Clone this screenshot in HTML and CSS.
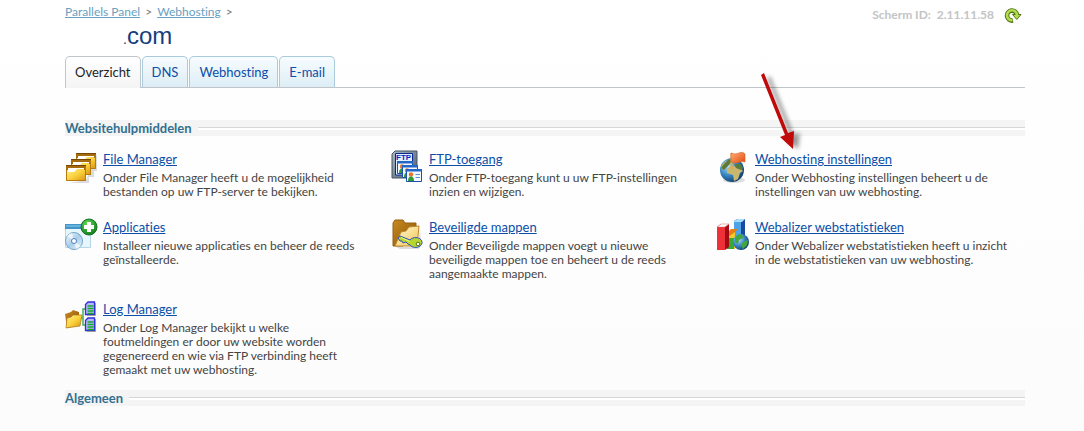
FILE: index.html
```html
<!DOCTYPE html>
<html lang="nl">
<head>
<meta charset="utf-8">
<title>Webhosting</title>
<link rel="stylesheet" href="styles.css">
</head>
<body>
<svg width="0" height="0" class="defs" aria-hidden="true">
  <defs>
    <linearGradient id="gold" x1="0" y1="0" x2="1" y2="1"><stop offset="0" stop-color="#fff08c"/><stop offset=".5" stop-color="#fbd23c"/><stop offset="1" stop-color="#d79012"/></linearGradient>
    <linearGradient id="brown" x1="0" y1="0" x2="1" y2="1"><stop offset="0" stop-color="#c98a22"/><stop offset="1" stop-color="#8a5206"/></linearGradient>
    <linearGradient id="cream" x1="0" y1="0" x2="1" y2="1"><stop offset="0" stop-color="#fffbd8"/><stop offset="1" stop-color="#f3c552"/></linearGradient>
    <radialGradient id="plus" cx=".4" cy=".3" r=".8"><stop offset="0" stop-color="#63d957"/><stop offset="1" stop-color="#077415"/></radialGradient>
    <radialGradient id="globe" cx=".35" cy=".35" r=".75"><stop offset="0" stop-color="#b4e0f6"/><stop offset=".5" stop-color="#3987c4"/><stop offset="1" stop-color="#09345f"/></radialGradient>
    <linearGradient id="flag" x1="0" y1="0" x2="1" y2="1"><stop offset="0" stop-color="#ffb27a"/><stop offset="1" stop-color="#e4470b"/></linearGradient>
    <linearGradient id="disc" x1="0" y1="0" x2="1" y2="1"><stop offset="0" stop-color="#f7fcff"/><stop offset=".5" stop-color="#a9cde8"/><stop offset="1" stop-color="#eaf6fd"/></linearGradient>
    <linearGradient id="server" x1="0" y1="0" x2="1" y2="1"><stop offset="0" stop-color="#a9b9c6"/><stop offset="1" stop-color="#46596a"/></linearGradient>
    <g id="folder">
      <path d="M0 0H20V16H0Z" fill="#a66c0b"/>
      <path d="M2 3H18V9H2Z" fill="#fff"/>
      <path d="M2 7H8L11 4H18V5H20V16H0V5H2Z" fill="url(#gold)"/>
      <path d="M.5 5V15.500H19.500V2" fill="none" stroke="#b67a10"/>
      <path d="M0 .5H20" stroke="#764704"/>
    </g>
    <g id="card">
      <path d="M.5 .5H15.500V12.500H.5Z" fill="#f4faff" stroke="#1c50a8"/>
      <path d="M0 0H16V2.500H0Z" fill="#2565c7"/>
      <circle cx="5" cy="5.500" r="2.200" fill="#e8762a"/>
      <path d="M2 12Q2 7.500 5 7.500T8 12Z" fill="#2f9a36"/>
      <path d="M9.500 5.500H14M9.500 8.500H14" stroke="#5d91cf"/>
    </g>
    <g id="log">
      <path d="M1.500 3.500L4 1H10.500V13.500H1.500Z" fill="#b6b6ff" stroke="#3030d8" stroke-width="1.300"/>
      <path d="M3.500 5H9.500M3.500 7.500H9.500M3.500 10H9.500M3.500 12.500H9.500" stroke="#18a828" stroke-width="1.500"/>
      <path d="M11.500 2V14.500H3" fill="none" stroke="#9b9b9b"/>
    </g>
  </defs>
</svg>

<div class="page">
  <header class="top">
    <nav class="crumbs" aria-label="Kruimelpad"><a href="#">Parallels Panel</a><span>&gt;</span><a href="#">Webhosting</a><span>&gt;</span></nav>
    <div class="screen">
      <span>Scherm ID:&nbsp; 2.11.11.58</span>
      <button class="refresh" type="button" aria-label="Vernieuwen">
        <svg width="18" height="16" viewBox="0 0 18 16"><path d="M9 13.500A5 5 0 1 1 13 8" fill="none" stroke="#52761c" stroke-width="4.600"/><path d="M8.500 7.500H17L12.800 12.500Z" fill="#b2dc4b" stroke="#52761c"/><path d="M8.400 13.300A5 5 0 1 1 13 8.500" fill="none" stroke="#b2dc4b" stroke-width="2.600"/></svg>
      </button>
    </div>
  </header>
  <h1><small>.</small>com</h1>

  <nav class="tabs" aria-label="Tabbladen">
    <a class="tab current" href="#" aria-current="page">Overzicht</a>
    <a class="tab" href="#">DNS</a>
    <a class="tab" href="#">Webhosting</a>
    <a class="tab" href="#">E-mail</a>
  </nav>

  <main>
    <h2 class="section"><span>Websitehulpmiddelen</span></h2>
    <div class="tools">
      <article class="tool">
        <svg class="icon" viewBox="0 0 32 32"><path d="M4 32H24V26H29V20H32V3L21 29Z" fill="#0002"/><use href="#folder" x="11" y="2"/><use href="#folder" x="6" y="8"/><use href="#folder" x="1" y="14"/></svg>
        <div class="text"><a href="#">File Manager</a><p>Onder File Manager heeft u de mogelijkheid<br>bestanden op uw FTP-server te bekijken.</p></div>
      </article>
      <article class="tool">
        <svg class="icon" viewBox="0 0 32 32"><path d="M1 3L4 0H26V23L23 27H1Z" fill="url(#server)" stroke="#455565"/><path d="M4.500 2.500H21.500V24H4.500Z" fill="#e4efff" stroke="#0a278e"/><text x="5" y="9" class="ftp">FTP</text><use href="#card" x="6" y="10"/><use href="#card" x="11" y="14"/><use href="#card" x="15" y="18"/></svg>
        <div class="text"><a href="#">FTP-toegang</a><p>Onder FTP-toegang kunt u uw FTP-instellingen<br>inzien en wijzigen.</p></div>
      </article>
      <article class="tool">
        <svg class="icon" viewBox="0 0 32 32"><ellipse cx="17" cy="29" rx="11" ry="3" fill="#0002"/><circle cx="15" cy="19" r="12" fill="url(#globe)"/><path d="M9 10Q5 12 4 17L6 19L9 14L12 12ZM10 18L14 15L22 16L26 20L23 22L21 28L17 30L16 24L10 22Z" fill="#c9b66f"/><path d="M4 17L7 13L12 8L15 10L11 15L7 19ZM17 13L23 13L26 17L24 19L19 17Z" fill="#5c7b3a"/><path d="M14.500 18V2" stroke="#e6a443" stroke-width="2"/><path d="M14 2Q18 4 22 2T28 3V11Q25 10 21 11.500T14 10.500Z" fill="url(#flag)" stroke="#d2602a" stroke-width=".6"/></svg>
        <div class="text"><a href="#">Webhosting instellingen</a><p>Onder Webhosting instellingen beheert u de<br>instellingen van uw webhosting.</p></div>
        <svg class="arrow" width="50" height="84" viewBox="0 0 50 84" aria-hidden="true"><path d="M8 3L11 1L35 60L41 58L39 74L27 65L32 63Z" class="shadow" transform="translate(4 3)"/><path d="M6 3L9 1L33 61L39 59L38 77L25 65L30 63Z" fill="#c00a0a"/></svg>
      </article>
      <article class="tool">
        <svg class="icon" viewBox="0 0 32 32"><path d="M.5 6H25.500V28.500H.5Z" fill="#e7f5fd" stroke="#b5d7ea"/><path d="M0 5H22V10H0Z" fill="#4195c8"/><path d="M1 7H20" stroke="#8dd1ef"/><circle cx="9" cy="22" r="8.500" fill="url(#disc)" stroke="#73a5c9"/><path d="M9 22L2 17A8 8 0 0 1 7 14ZM9 22L16 27A8 8 0 0 1 11 30Z" fill="#ffffffa0"/><circle cx="9" cy="22" r="2.500" fill="#fff" stroke="#4c80bb"/><circle cx="24" cy="8" r="8" fill="url(#plus)" stroke="#137421"/><path d="M22 3H26V6H29V10H26V13H22V10H19V6H22Z" fill="#fff"/></svg>
        <div class="text"><a href="#">Applicaties</a><p>Installeer nieuwe applicaties en beheer de reeds<br>geïnstalleerde.</p></div>
      </article>
      <article class="tool">
        <svg class="icon" viewBox="0 0 32 32"><path d="M2 4L4 1H12L14 4H25V9L12 27H2Z" fill="url(#brown)" stroke="#946010"/><path d="M4 27L10 13L15 12L18 8L28 7L26 27Z" fill="url(#cream)" stroke="#bd872b"/><path d="M5 28H27L29 9L30 26L28 30H9Z" fill="#0002"/><path d="M19 21L9 17L7 19L9 22L11 22L12 24L15 23L17 25L19 26A6.500 5 0 1 0 19 21Z" fill="#b6d52e" stroke="#2f4fc0"/><path d="M10 18.500L19 22.500" stroke="#e9f79a"/><circle cx="27" cy="25" r="1.800" fill="#fff" stroke="#55751a"/></svg>
        <div class="text"><a href="#">Beveiligde mappen</a><p>Onder Beveiligde mappen voegt u nieuwe<br>beveiligde mappen toe en beheert u de reeds<br>aangemaakte mappen.</p></div>
      </article>
      <article class="tool">
        <svg class="icon" viewBox="0 0 32 32"><path d="M17 2L20 0H28V28H17Z" fill="#1a4a9e"/><path d="M17 3H24V28H17Z" fill="#4da4e8"/><path d="M17 2L20 0H28L25 3H17Z" fill="#a7dcf7"/><path d="M11 13L14 10H21L18 13V29H11Z" fill="#e97c13"/><path d="M11 18L18 13V30H11Z" fill="#f7c92b"/><path d="M10 19H17V30H10Z" fill="#39a837"/><path d="M0 8L4 5H12V28L8 31H0Z" fill="#a30a13"/><path d="M0 8H8V31H0Z" fill="#ee3038"/><path d="M0 8L4 5H12L8 8Z" fill="#fff" stroke="#d66a6a" stroke-width=".5"/><circle cx="24" cy="23" r="8" fill="url(#globe)"/><path d="M18 19Q20 15 25 15L26 19L22 21L21 25L18 23ZM26 23L31 21L30 26L26 30L24 26Z" fill="#43a63e"/></svg>
        <div class="text"><a href="#">Webalizer webstatistieken</a><p>Onder Webalizer webstatistieken heeft u inzicht<br>in de webstatistieken van uw webhosting.</p></div>
      </article>
      <article class="tool">
        <svg class="icon" viewBox="0 0 32 32"><path d="M14 17H18V8H22M18 17V24H22" fill="none" stroke="#48ae54" stroke-width="1.500"/><path d="M0 13L6 11L8 9L14 11V24L2 27Z" fill="url(#brown)"/><path d="M1 27L2 17L6 16L8 14L17 14L15 25Z" fill="url(#gold)" stroke="#aa731a" stroke-width=".7"/><use href="#log" x="19" y="0"/><use href="#log" x="19" y="16"/></svg>
        <div class="text"><a href="#">Log Manager</a><p>Onder Log Manager bekijkt u welke<br>foutmeldingen er door uw website worden<br>gegenereerd en wie via FTP verbinding heeft<br>gemaakt met uw webhosting.</p></div>
      </article>
    </div>
    <h2 class="section"><span>Algemeen</span></h2>
  </main>
</div>
</body>
</html>
```
FILE: styles.css
```css
* { box-sizing: border-box; }
html { min-height: 100%; background: linear-gradient(#fff, #fcfcfc); }
body { margin: 0; color: #444; font-family: "Trebuchet MS", Lato, sans-serif; font-size: 12px; line-height: 14px; font-variant-ligatures: none; }
h1, h2, p { margin: 0; }
a { color: #0b4ea8; }
.defs { position: absolute; }
.page { padding: 5px 59px 24px 65px; }
.top { display: flex; justify-content: space-between; height: 18px; }
.crumbs { display: flex; gap: 5px; color: #777; }
.crumbs a { color: #6aa1bf; }
.screen { display: flex; align-items: center; gap: 10px; height: 20px; padding-right: 3px; color: #c4c4c4; font-weight: 700; }
.refresh { display: flex; padding: 0; border: 0; background: none; cursor: pointer; }
h1 { padding-left: 58px; color: #153e7e; font: 24px/26px "Liberation Sans", Arial, sans-serif; }
h1 small { font-size: 14px; }
.tabs { display: flex; align-items: flex-end; gap: 1px; height: 36px; border-bottom: 1px solid #bfc5c8; }
.tab { height: 31px; padding: 0 9px; border: 1px solid #a9cbdc; border-bottom: 0; border-radius: 5px 5px 0 0; background: linear-gradient(#f7fcff, #ddedf5); font-size: 13px; line-height: 30px; text-decoration: none; }
.tab.current { height: 32px; margin-bottom: -1px; border-color: #bfc5c8; background: linear-gradient(#fff, #f4f4f4); color: #222; }
main { padding-top: 32px; }
.section { display: flex; align-items: center; gap: 6px; height: 16px; background: #f4f4f4; color: #33708f; font-size: 13px; line-height: 16px; font-weight: 700; }
.section::after { content: ""; flex: 1; height: 2px; border-top: 1px solid #d3d7d9; background: #fff; }
.tools { display: grid; grid-template-columns: 326fr 326fr 308fr; row-gap: 20px; padding: 15px 0 13px; }
.tool { position: relative; display: flex; gap: 6px; }
.icon { flex: none; width: 32px; height: 32px; overflow: visible; }
.text { white-space: nowrap; }
.text a { display: block; width: max-content; margin-bottom: 4px; font-size: 13px; line-height: 16px; }
.ftp { font: bold 8px "Liberation Sans", Arial, sans-serif; fill: #0a1fc0; }
.arrow { position: absolute; left: 38px; top: -79px; pointer-events: none; }
.shadow { fill: #0006; filter: blur(2px); }
```
